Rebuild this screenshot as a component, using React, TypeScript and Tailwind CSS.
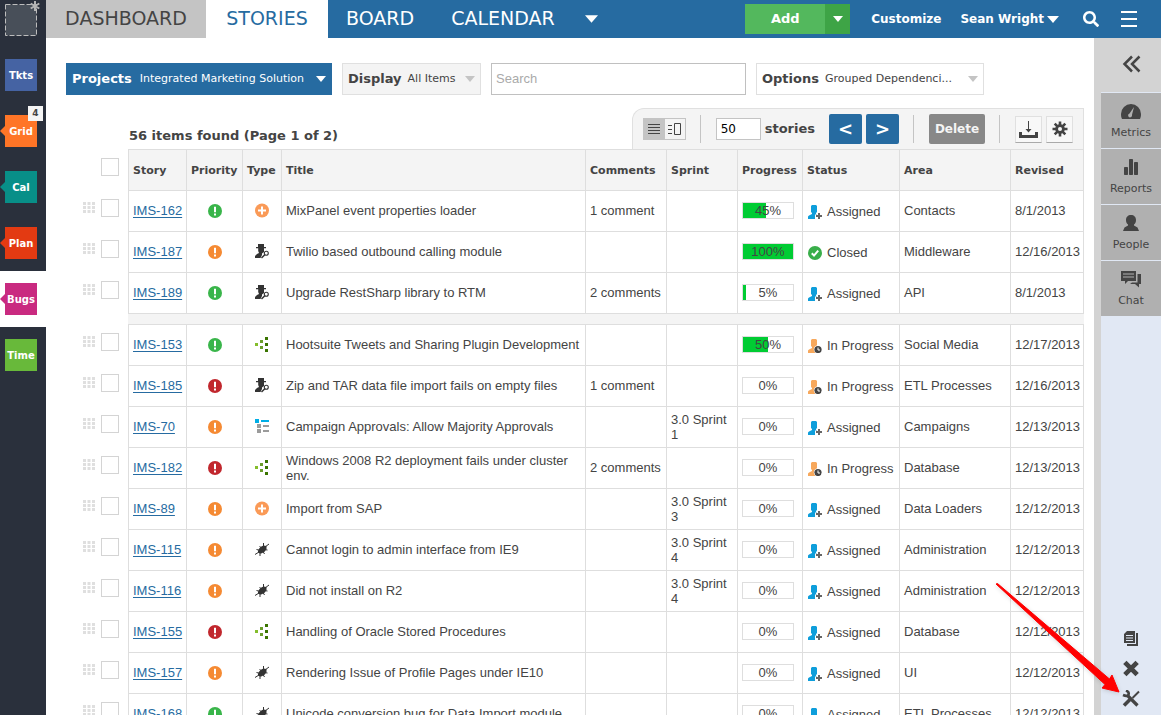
import React from "react";
import { FaSearch } from "react-icons/fa";

type Priority = "low" | "mid" | "high";
type Kind = "feature" | "spy" | "nodes" | "list" | "bug";
type Status = "Assigned" | "Closed" | "In Progress";
type Story = {
  id: string;
  priority: Priority;
  kind: Kind;
  title: string;
  comments?: string;
  sprint?: string;
  progress: number;
  status: Status;
  area: string;
  revised: string;
};

const groups: Story[][] = [
  [
    { id: "IMS-162", priority: "low", kind: "feature", title: "MixPanel event properties loader", comments: "1 comment", progress: 45, status: "Assigned", area: "Contacts", revised: "8/1/2013" },
    { id: "IMS-187", priority: "mid", kind: "spy", title: "Twilio based outbound calling module", progress: 100, status: "Closed", area: "Middleware", revised: "12/16/2013" },
    { id: "IMS-189", priority: "low", kind: "spy", title: "Upgrade RestSharp library to RTM", comments: "2 comments", progress: 5, status: "Assigned", area: "API", revised: "8/1/2013" },
  ],
  [
    { id: "IMS-153", priority: "low", kind: "nodes", title: "Hootsuite Tweets and Sharing Plugin Development", progress: 50, status: "In Progress", area: "Social Media", revised: "12/17/2013" },
    { id: "IMS-185", priority: "high", kind: "spy", title: "Zip and TAR data file import fails on empty files", comments: "1 comment", progress: 0, status: "In Progress", area: "ETL Processes", revised: "12/16/2013" },
    { id: "IMS-70", priority: "mid", kind: "list", title: "Campaign Approvals: Allow Majority Approvals", sprint: "3.0 Sprint 1", progress: 0, status: "Assigned", area: "Campaigns", revised: "12/13/2013" },
    { id: "IMS-182", priority: "high", kind: "nodes", title: "Windows 2008 R2 deployment fails under cluster env.", comments: "2 comments", progress: 0, status: "In Progress", area: "Database", revised: "12/13/2013" },
    { id: "IMS-89", priority: "mid", kind: "feature", title: "Import from SAP", sprint: "3.0 Sprint 3", progress: 0, status: "Assigned", area: "Data Loaders", revised: "12/12/2013" },
    { id: "IMS-115", priority: "mid", kind: "bug", title: "Cannot login to admin interface from IE9", sprint: "3.0 Sprint 4", progress: 0, status: "Assigned", area: "Administration", revised: "12/12/2013" },
    { id: "IMS-116", priority: "mid", kind: "bug", title: "Did not install on R2", sprint: "3.0 Sprint 4", progress: 0, status: "Assigned", area: "Administration", revised: "12/12/2013" },
    { id: "IMS-155", priority: "high", kind: "nodes", title: "Handling of Oracle Stored Procedures", progress: 0, status: "Assigned", area: "Database", revised: "12/12/2013" },
    { id: "IMS-157", priority: "mid", kind: "bug", title: "Rendering Issue of Profile Pages under IE10", progress: 0, status: "Assigned", area: "UI", revised: "12/12/2013" },
    { id: "IMS-168", priority: "low", kind: "bug", title: "Unicode conversion bug for Data Import module", progress: 0, status: "Assigned", area: "ETL Processes", revised: "12/12/2013" },
  ],
];

const priorityColor: Record<Priority, string> = { low: "#39b54a", mid: "#f58a33", high: "#c1272d" };
const priorityName: Record<Priority, string> = { low: "Low", mid: "Medium", high: "High" };

function Caret({ className = "" }: { className?: string }) {
  return (
    <svg viewBox="0 0 12 7" className={className} fill="currentColor" aria-hidden="true">
      <path d="M0 0h12L6 7z" />
    </svg>
  );
}

function PriorityIcon({ level }: { level: Priority }) {
  return (
    <svg viewBox="0 0 14 14" className="mx-auto block size-3.5" role="img" aria-label={priorityName[level]}>
      <circle cx="7" cy="7" r="7" fill={priorityColor[level]} />
      <path d="M6 2.8h2v5.4H6zM6 9.4h2v2H6z" fill="#fff" />
    </svg>
  );
}

function KindIcon({ kind }: { kind: Kind }) {
  return (
    <svg viewBox="0 0 14 15" className="mx-auto block h-[15px] w-3.5" role="img" aria-label={kind}>
      {kind === "feature" && (
        <>
          <circle cx="7" cy="7.5" r="7" fill="#fa9a57" />
          <path d="M6 3.5h2v3h3v2H8v3H6v-3H3v-2h3z" fill="#fff" />
        </>
      )}
      {kind === "spy" && (
        <>
          <path d="M3 0h6v3h2v1.200H9V8L7 9.500V11l-1.500 3H0v-2l2-2 2-1-.8-2V4.200H1V3h2z" fill="#333" />
          <circle cx="11.300" cy="9.300" r="2" fill="#fff" stroke="#333" strokeWidth="1.100" />
          <path d="M9.800 10.800 6.500 14" stroke="#333" strokeWidth="1.500" />
        </>
      )}
      {kind === "nodes" && (
        <>
          <path d="M0 6h3v3H0z" fill="#84bd2c" />
          <path d="M5 3h3v3H5zM5 9h3v3H5z" fill="#6a9d2a" />
          <path d="M10 0h3v3h-3zM10 6h3v3h-3zM10 12h3v3h-3z" fill="#3a7400" />
        </>
      )}
      {kind === "list" && (
        <>
          <path d="M0 0h4v4H0zM6 1h8v2H6z" fill="#00aee6" />
          <path d="M2 5h4v4H2zM8 6h6v2H8zM2 10h4v4H2zM8 11h6v2H8z" fill="#9b9b9b" />
        </>
      )}
      {kind === "bug" && (
        <>
          <path d="M3 10.500C2.500 7.500 5.500 4.500 8.500 3.500L11.500 4v2.500C11 9 8 11.500 5 11.500z" fill="#333" />
          <path d="M0 12.500 4 10M14 2 10 5M4.500 4.500 8 6.500M8.500 1 8.500 5M1.500 7.500l4 1M12.500 8 9 7.500M5 11v3M8 9.500 9.500 12" stroke="#333" strokeWidth="1" />
        </>
      )}
    </svg>
  );
}

function StatusIcon({ status }: { status: Status }) {
  if (status === "Closed") {
    return (
      <svg viewBox="0 0 14 14" className="size-3.5 shrink-0" aria-hidden="true">
        <circle cx="7" cy="7" r="7" fill="#39ae4a" />
        <path d="M3.800 7.200 6 9.600l4.200-5" fill="none" stroke="#fff" strokeWidth="2" />
      </svg>
    );
  }
  const assigned = status === "Assigned";
  return (
    <svg viewBox="0 0 14 14" className="size-3.5 shrink-0" aria-hidden="true">
      <path d="M4 0h4l1 1v6L8 8v1l2 1v4H0v-2.500L1 10.500 4 9V8L3 7V1z" fill={assigned ? "#0e9edb" : "#f7a85c"} />
      {assigned ? (
        <>
          <path d="M9 7h4v2h1v5H7V9.500h2z" fill="#fff" />
          <path d="M10 8h2v2h2v2h-2v2h-2v-2H8v-2h2z" fill="#666" />
        </>
      ) : (
        <>
          <circle cx="10" cy="10.500" r="4.200" fill="#fff" />
          <circle cx="10" cy="10.500" r="3.600" fill="#444" />
          <path d="M10 8.500v2.500h2" fill="none" stroke="#fff" strokeWidth="1" />
        </>
      )}
    </svg>
  );
}

function Handle() {
  return (
    <svg viewBox="0 0 12 11" className="mt-[3px] h-[11px] w-3" fill="#dfdfdf" aria-hidden="true">
      {[0, 4, 8].map((y) => [0, 4.5, 9].map((x) => <rect key={`${x}-${y}`} x={x} y={y} width="3" height="3" />))}
    </svg>
  );
}

function Tick({ label }: { label: string }) {
  return <input type="checkbox" aria-label={label} className="block size-[18px] appearance-none border border-[#d4d4d4] bg-white checked:bg-[#266ba1]" />;
}

const railItems = [
  { label: "Tkts", tile: "bg-[#4563a3]", arrow: "", active: false },
  { label: "Grid", tile: "bg-[#ff7527]", arrow: "border-r-[#ff7527]", active: false, badge: "4" },
  { label: "Cal", tile: "bg-[#088f88]", arrow: "border-r-[#088f88]", active: false },
  { label: "Plan", tile: "bg-[#e33a12]", arrow: "border-r-[#e33a12]", active: false },
  { label: "Bugs", tile: "bg-[#c92a80]", arrow: "border-r-[#c92a80]", active: true },
  { label: "Time", tile: "bg-[#68b93a]", arrow: "", active: false },
];

function Rail() {
  return (
    <nav aria-label="Products" className="w-[46px] shrink-0 bg-[#2a303c]">
      <div className="relative h-[47px] pt-1 pl-[5px]">
        <svg viewBox="0 0 32 32" className="size-8" aria-hidden="true">
          <rect x=".5" y=".5" width="31" height="31" fill="#484f59" stroke="#bdbdbd" strokeDasharray="5 2" />
        </svg>
        <svg viewBox="0 0 10 10" className="absolute top-px left-[30px] size-2.5" stroke="#b5b5b5" strokeWidth="2" aria-hidden="true">
          <path d="M5 0v10M.7 2.500l8.600 5M9.300 2.500l-8.600 5" />
        </svg>
      </div>
      {railItems.map((item) => (
        <div key={item.label} className={`relative h-14 py-3 pl-[5px] ${item.active ? "bg-white" : ""}`}>
          <a href="#" className={`flex size-8 items-center justify-center text-[10px] font-bold text-white ${item.tile}`}>
            {item.label}
          </a>
          {item.arrow && <span className={`absolute top-[23px] left-0 border-y-[5px] border-r-[5px] border-y-transparent ${item.arrow}`} />}
          {item.badge && (
            <span className="absolute top-[3px] left-7 flex size-[15px] items-center justify-center bg-[#f4f4f4] text-[9px] font-bold text-[#444]">{item.badge}</span>
          )}
        </div>
      ))}
    </nav>
  );
}

function TopBar() {
  return (
    <header className="flex h-[38px] shrink-0 items-center bg-[#266ba1] text-white">
      <nav aria-label="Views" className="flex h-full text-[19px] leading-9">
        <a href="#" className="w-40 bg-[#c4c4c4] text-center text-[#444]">DASHBOARD</a>
        <a href="#" className="w-[122px] bg-white text-center text-[#266ba1]">STORIES</a>
        <a href="#" className="pl-[18px]">BOARD</a>
        <a href="#" className="pl-[37px]">CALENDAR</a>
        <button aria-label="More views" className="ml-[30px]"><Caret className="h-2 w-[13px]" /></button>
      </nav>
      <div className="ml-auto flex items-center pr-6 text-xs font-bold">
        <div className="mr-[21px] flex h-[30px] text-[13px]">
          <button className="w-20 bg-[#53b85d]">Add</button>
          <button aria-label="Add options" className="flex w-[25px] items-center justify-center bg-[#3ea446]"><Caret className="h-1.5 w-2.5" /></button>
        </div>
        <a href="#">Customize</a>
        <button className="ml-[19px] flex items-center gap-[3px]">Sean Wright <Caret className="h-[7px] w-3" /></button>
        <button aria-label="Search" className="ml-6"><FaSearch className="size-4" /></button>
        <button aria-label="Menu" className="ml-[22px] flex flex-col gap-[5px]">
          <span className="h-0.5 w-4 bg-white" />
          <span className="h-0.5 w-4 bg-white" />
          <span className="h-0.5 w-4 bg-white" />
        </button>
      </div>
    </header>
  );
}

function Filters() {
  return (
    <div className="flex h-8 gap-2.5">
      <button className="flex w-[266px] items-center bg-[#266ba1] px-1.5 text-white">
        <span className="text-[13px] font-bold">Projects</span>
        <span className="ml-2 text-[11px] whitespace-nowrap">Integrated Marketing Solution</span>
        <Caret className="ml-auto h-1.5 w-2.5" />
      </button>
      <button className="flex w-[139px] items-center border border-[#e0e0e0] bg-[#f4f4f4] px-[5px] text-[#444]">
        <span className="text-[13px] font-bold">Display</span>
        <span className="ml-1.5 text-[11px] whitespace-nowrap">All Items</span>
        <Caret className="ml-auto h-1.5 w-2.5 text-[#c4c4c4]" />
      </button>
      <input aria-label="Search" placeholder="Search" className="w-[255px] border border-[#c0c0c0] px-1 font-['Liberation_Sans',sans-serif] text-[13px] placeholder:text-[#aaa]" />
      <button className="flex w-[228px] items-center border border-[#e0e0e0] bg-white px-[5px] text-[#444]">
        <span className="text-[13px] font-bold">Options</span>
        <span className="ml-1.5 text-[11px] whitespace-nowrap">Grouped Dependenci...</span>
        <Caret className="ml-auto h-1.5 w-2.5 text-[#c4c4c4]" />
      </button>
    </div>
  );
}

function Divider() {
  return <span className="mr-[15px] ml-3.5 h-7 w-px bg-[#c4c4c4]" />;
}

function Toolbar() {
  return (
    <div className="flex h-[41px] items-center rounded-tl-xl border border-b-0 border-[#e0e0e0] bg-[#f4f4f4] px-2.5 text-[#444]">
      <div className="flex h-[22px] border border-[#c4c4c4]">
        <button aria-label="List view" className="flex w-[21px] items-center justify-center bg-[#c4c4c4]">
          <svg viewBox="0 0 12 10" className="h-2.5 w-3" fill="#444"><path d="M0 0h12v1H0zM0 3h12v1H0zM0 6h12v1H0zM0 9h12v1H0z" /></svg>
        </button>
        <button aria-label="Split view" className="flex w-5 items-center justify-center">
          <svg viewBox="0 0 13 12" className="h-3 w-[13px]"><path d="M0 2.500h4M0 6.500h4M0 10.500h4M6.500.500h6v11h-6z" fill="none" stroke="#444" /></svg>
        </button>
      </div>
      <Divider />
      <label className="flex items-center gap-1 text-[13px] font-bold">
        <input defaultValue="50" className="h-[22px] w-[45px] border border-[#c4c4c4] bg-white px-1 text-xs font-normal text-black" />
        stories
      </label>
      <button aria-label="Previous page" className="ml-3.5 h-[30px] w-[33px] rounded-xs bg-[#266ba1] text-lg leading-7 font-bold text-white">&lt;</button>
      <button aria-label="Next page" className="ml-1 h-[30px] w-[33px] rounded-xs bg-[#266ba1] text-lg leading-7 font-bold text-white">&gt;</button>
      <Divider />
      <button className="h-[30px] w-14 rounded-xs bg-[#888] text-xs font-bold text-[#f4f4f4]">Delete</button>
      <Divider />
      <button aria-label="Download" className="flex size-[27px] items-center justify-center border border-[#e0e0e0] border-b-[#aaa] bg-[#f8f8f8]">
        <svg viewBox="0 0 19 17" className="h-[17px] w-[19px]" fill="#444"><path d="M9 0h1v8h2.500l-3 3.500L6.500 8H9zM0 11h3v3h13v-3h3v6H0z" /></svg>
      </button>
      <button aria-label="Settings" className="ml-1 flex size-[27px] items-center justify-center border border-[#e0e0e0] border-b-[#aaa] bg-[#f8f8f8]">
        <svg viewBox="0 0 16 16" className="size-4">
          <path d="M8 .5v15M.5 8h15M2.700 2.700l10.600 10.600M13.300 2.700 2.700 13.300" stroke="#444" strokeWidth="2.600" />
          <circle cx="8" cy="8" r="4.800" fill="#444" />
          <circle cx="8" cy="8" r="2" fill="#f8f8f8" />
        </svg>
      </button>
    </div>
  );
}

const columns = ["Story", "Priority", "Type", "Title", "Comments", "Sprint", "Progress", "Status", "Area", "Revised"];
const cell = "border-b border-l border-[#dedede] px-1 pb-px";

function StoryRow({ story }: { story: Story }) {
  return (
    <tr className="h-[41px]">
      <td className="pt-2 pl-[17px] align-top">
        <div className="flex gap-1.5">
          <Handle />
          <Tick label={`Select ${story.id}`} />
        </div>
      </td>
      <td className={`${cell} whitespace-nowrap`}><a href="#" className="text-[#266ba1] underline underline-offset-2">{story.id}</a></td>
      <td className={cell}><PriorityIcon level={story.priority} /></td>
      <td className={cell}><KindIcon kind={story.kind} /></td>
      <td className={cell}>{story.title}</td>
      <td className={`${cell} whitespace-nowrap`}>{story.comments}</td>
      <td className={cell}>{story.sprint}</td>
      <td className={cell}>
        <div className="relative h-[17px] w-[52px] border border-[#dedede] text-center leading-[15px]">
          <div className="absolute inset-y-0 left-0 bg-[#00cc33]" style={{ width: `${story.progress}%` }} />
          <span className="relative">{story.progress}%</span>
        </div>
      </td>
      <td className={cell}>
        <div className="flex items-center gap-[5px] pt-0.5 pl-px whitespace-nowrap">
          <StatusIcon status={story.status} />
          {story.status}
        </div>
      </td>
      <td className={cell}>{story.area}</td>
      <td className={`${cell} border-r`}>{story.revised}</td>
    </tr>
  );
}

function StoryTable() {
  return (
    <table className="w-full table-fixed border-separate border-spacing-0 text-left font-['Liberation_Sans',Arial,sans-serif] text-[13px] leading-[15px]">
      <colgroup>
        <col className="w-[62px]" />
        <col className="w-[58px]" />
        <col className="w-14" />
        <col className="w-[39px]" />
        <col />
        <col className="w-[81px]" />
        <col className="w-[71px]" />
        <col className="w-[65px]" />
        <col className="w-[97px]" />
        <col className="w-[111px]" />
        <col className="w-[74px]" />
      </colgroup>
      <thead>
        <tr className="h-[42px] font-['DejaVu_Sans',Verdana,sans-serif] text-[11px]">
          <th className="pt-[9px] pl-[35px] align-top"><Tick label="Select all stories" /></th>
          {columns.map((name) => (
            <th key={name} className="border-y border-l border-[#dedede] bg-[#f4f4f4] px-1 font-bold whitespace-nowrap last:border-r">{name}</th>
          ))}
        </tr>
      </thead>
      {groups.map((stories, index) => (
        <tbody key={index}>
          {index > 0 && (
            <tr className="h-[11px]">
              <td className="p-0" />
              <td colSpan={10} className="border-b border-[#dedede] bg-[#f4f4f4] p-0" />
            </tr>
          )}
          {stories.map((story) => <StoryRow key={story.id} story={story} />)}
        </tbody>
      ))}
    </table>
  );
}

const panelItems = [
  {
    label: "Metrics",
    icon: <path d="M10 2a10 10 0 0 1 10 10c0 2-.3 3.500-1 5H1c-.7-1.500-1-3-1-5A10 10 0 0 1 10 2z M13 5 8.500 11.500a2 2 0 1 0 2.500 1.300z" fillRule="evenodd" />,
  },
  {
    label: "Reports",
    icon: (
      <>
        <rect x="3" y="9" width="4" height="8" rx=".7" />
        <rect x="8" y="1" width="4" height="16" rx=".7" />
        <rect x="13" y="4" width="4" height="13" rx=".7" />
      </>
    ),
  },
  {
    label: "People",
    icon: <path d="M10 1c3 0 5 2 5 5 0 2-.7 3.500-2 4.500v1l3.500 2L18 17H2l1.500-3.500 3.500-2v-1C5.700 9.500 5 8 5 6c0-3 2-5 5-5z" />,
  },
  {
    label: "Chat",
    icon: <path d="M0 1h15v10H7l-3 3v-3H0zM2 3.500v1h11v-1zM2 6.500v1h11v-1zM16.500 4H20v10h-2v3.500L14 14H9l2-1.500h5.500z" fillRule="evenodd" />,
  },
];

function SidePanel() {
  return (
    <aside className="flex w-[67px] shrink-0 flex-col text-[#444]">
      <button aria-label="Collapse panel" className="flex h-[54px] shrink-0 items-center bg-[#d3d3d3] pb-0.5 pl-7">
        <svg viewBox="0 0 20 18" className="h-[18px] w-5" fill="none" stroke="#444" strokeWidth="2.500"><path d="M10 1.500 2.500 9l7.500 7.500M17.500 1.500 10 9l7.500 7.500" /></svg>
      </button>
      <div className="flex flex-1 flex-col border-l-[7px] border-[#d3d3d3] bg-[#e1e8f4]">
        {panelItems.map((item) => (
          <a key={item.label} href="#" className="mt-px flex h-[55px] flex-col items-center bg-[#b0b0b0] pt-[9px] text-[11px] leading-4">
            <svg viewBox="0 0 20 18" className="mb-[5px] h-[18px] w-5" fill="#444" aria-hidden="true">{item.icon}</svg>
            {item.label}
          </a>
        ))}
        <div className="mt-auto flex flex-col items-center gap-[13px] pb-2">
          <button aria-label="Notes">
            <svg viewBox="0 0 16 17" className="block h-[17px] w-4" fill="#444"><path d="M4 1h8v12H1V4zM3 5v1h7V5zM3 7.500v1h7v-1zM3 10v1h7v-1zM13 3h2v13H4v-2h9z" fillRule="evenodd" /></svg>
          </button>
          <button aria-label="Close">
            <svg viewBox="0 0 18 18" className="block h-[17px] w-[18px]"><path d="m2.500 2.500 13 13M15.500 2.500l-13 13" stroke="#444" strokeWidth="5" /></svg>
          </button>
          <button aria-label="Tools">
            <svg viewBox="0 0 18 17" className="block h-[17px] w-[18px]" fill="none" stroke="#444">
              <path d="m5.500 5.500 10 10" strokeWidth="3.200" />
              <path d="M4 .5q3.500 1.500 2.500 4T1 5" strokeWidth="2.600" />
              <path d="M17 1.500 10.500 8" strokeWidth="2" />
              <path d="m8 9.500-6 6" strokeWidth="3.500" />
            </svg>
          </button>
        </div>
      </div>
    </aside>
  );
}

export default function App() {
  return (
    <div className="relative flex h-screen overflow-hidden bg-white font-['DejaVu_Sans',Verdana,sans-serif] text-[#444]">
      <Rail />
      <div className="flex min-w-0 flex-1 flex-col">
        <TopBar />
        <div className="flex min-h-0 flex-1">
          <main className="min-w-0 flex-1 overflow-hidden pt-[25px] pr-2.5 pl-5">
            <Filters />
            <div className="mt-[13px] flex items-end justify-between">
              <h1 className="pb-1 pl-[63px] text-[13px] leading-[18px] font-bold">56 items found (Page 1 of 2)</h1>
              <Toolbar />
            </div>
            <StoryTable />
          </main>
          <SidePanel />
        </div>
      </div>
      <svg viewBox="0 0 126 112" className="pointer-events-none absolute right-10 bottom-5 h-28 w-[126px] drop-shadow-sm" aria-hidden="true">
        <path d="M1 1 2.500.5 114.500 96 117 92l7 17-17-4 3-3.500z" fill="#f00" stroke="#f00" strokeWidth="1" strokeLinejoin="round" />
      </svg>
    </div>
  );
}
